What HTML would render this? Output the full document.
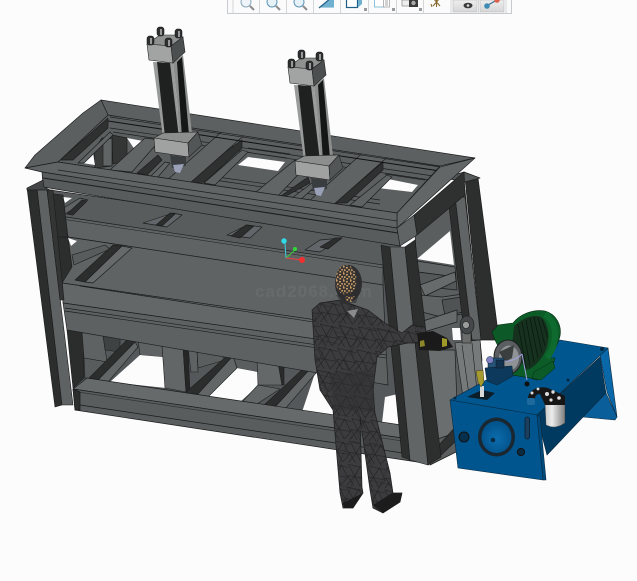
<!DOCTYPE html>
<html><head><meta charset="utf-8"><title>CAD model</title>
<style>
html,body{margin:0;padding:0;background:#fcfcfc;width:637px;height:581px;overflow:hidden}
svg{display:block;position:absolute;left:0;top:0}
</style></head><body>
<svg width="637" height="581" viewBox="0 0 637 581" xmlns="http://www.w3.org/2000/svg">
<defs>
<pattern id="mesh" width="19" height="23" patternUnits="userSpaceOnUse" patternTransform="rotate(4)">
<rect width="19" height="23" fill="#3c3c3e"/>
<path d="M0 2L19 5M0 13L19 15M0 2L7 13L0 23M7 13L12 3M7 13L13 23M12 3L19 15L13 23M0 13L7 23" stroke="#1d1d1e" stroke-width=".55" fill="none"/>
</pattern>
<pattern id="mesh2" width="31" height="37" patternUnits="userSpaceOnUse" patternTransform="rotate(-9)">
<path d="M0 10L31 22M5 0L15 37M31 4L10 37" stroke="#222223" stroke-width=".45" fill="none"/>
</pattern>
<pattern id="sp" width="7" height="7" patternUnits="userSpaceOnUse">
<rect width="7" height="7" fill="#3a3532"/>
<g fill="#cfa268"><rect x="0" y="0" width="1.6" height="1.6"/><rect x="3" y="1" width="1.8" height="1.5"/><rect x="5.3" y="3" width="1.6" height="1.6"/><rect x="1" y="3.3" width="1.6" height="1.6"/><rect x="3.4" y="5" width="1.7" height="1.5"/><rect x="0" y="5.6" width="1.2" height="1.2"/></g>
</pattern>
<linearGradient id="gr" x1="0" x2="0" y1="0" y2="1"><stop offset="0" stop-color="#eee"/><stop offset="1" stop-color="#d6d6d6"/></linearGradient>
<linearGradient id="fl" x1="0" x2="1" y1="0" y2="0"><stop offset="0" stop-color="#c8c8c8"/><stop offset=".35" stop-color="#ececec"/><stop offset="1" stop-color="#7d7d7d"/></linearGradient>
<radialGradient id="gauge" cx=".5" cy=".55" r=".6"><stop offset="0" stop-color="#0d6cad"/><stop offset="1" stop-color="#004f86"/></radialGradient>

<g id="cyl">
<polygon points="153,62 173,63 181,140 163,138" fill="#999b9b"/>
<polygon points="157,62 170,63 179,138 165,137" fill="#1f2020"/>
<polygon points="173,63 183,55 192,133 181,140" fill="#8c8e8e"/>
<polygon points="177,62 182,57 189,135 182,138" fill="#151616"/>
<polygon points="170,155 186,157 186,166 172,168" fill="#3a3d40"/>
<polygon points="173,165 184,164 180,173 175,172" fill="#9aa0b8"/>
<polygon points="154,138 163,133 198,132 188,143" fill="#8c8e8e" stroke="#222" stroke-width=".6"/>
<polygon points="154,138 188,143 189,157 155,152" fill="#a0a1a1" stroke="#222" stroke-width=".6"/>
<polygon points="188,143 198,132 202,145 189,157" fill="#535656" stroke="#222" stroke-width=".6"/>
<polygon points="147,44 160,35 177,35 183,37 171,46" fill="#8f9191" stroke="#222" stroke-width=".6"/>
<polygon points="147,44 171,46 173,63 149,60" fill="#a2a3a3" stroke="#222" stroke-width=".6"/>
<polygon points="171,46 183,37 185,52 173,63" fill="#4c4f4f" stroke="#222" stroke-width=".6"/>
<g fill="#2e2f30" stroke="#111" stroke-width=".5">
<rect x="157" y="27" width="7" height="9" rx="2.5"/><rect x="175" y="29" width="7" height="9" rx="2.5"/><rect x="147" y="36" width="7" height="9" rx="2.5"/><rect x="165" y="38" width="7" height="9" rx="2.5"/>
</g>
<g fill="#999"><rect x="160" y="29" width="2" height="6"/><rect x="178" y="31" width="2" height="6"/><rect x="150" y="38" width="2" height="6"/><rect x="168" y="40" width="2" height="6"/></g>
</g>
</defs>

<rect width="637" height="581" fill="#fcfcfc"/>

<!-- right side section -->
<g stroke="#1d1e1e" stroke-width=".7" stroke-linejoin="round">
<polygon points="415,235 465,190 482,360 460,450 430,465" fill="#5a5e5f"/>
<polygon points="417,259 450,231 454,265" fill="#fcfcfc" stroke="none"/>
<polygon points="417,261 455,267 456,277 418,272" fill="#606465"/>
<polygon points="418,272 456,277 457,290 419,286" fill="#545859"/>
<polygon points="420,285 455,272 456,281 425,296" fill="#676b6c"/>
<polygon points="420,295 442,297 470,293 470,312 445,318 422,312" fill="#5f6364"/>
<polygon points="442,300 468,296 468,311 445,316" fill="#505354"/>
<polygon points="420,322 457,310 457,322 424,332" fill="#676b6c"/>
<polygon points="418,350 455,350 458,432 423,444" fill="#6a6e6f"/>
<polygon points="430,455 458,424 459,438 438,458" fill="#2f3130"/>
<polygon points="465,178 478,178 499,340 481,340" fill="#2d2f2e"/>
<polygon points="455,197 465,197 481,340 472,340" fill="#606465"/>
<polygon points="449,207 455,197 472,340 465,340" fill="#2d2f2e"/>
<polygon points="452,328 460,328 461,340 453,340" fill="#fcfcfc" stroke="none"/>
<polygon points="445,178 464,172 480,178 465,182" fill="#55595a"/>
</g>

<!-- base -->
<polygon points="55,195 400,240 422,462 75,405" fill="#54585a"/>

<!-- under band -->
<g stroke="#1d1e1e" stroke-width=".6" stroke-linejoin="round">
<polygon points="67,330 83,332 84,378 73,388" fill="#2b2d2c"/>
<polygon points="82,332 103,335 107,362 84,358" fill="#5e6263"/>
<polygon points="84,358 107,362 109,381 85,378" fill="#585c5d"/>
<polygon points="103,335 120,338 120,352 105,350" fill="#3f4242"/>
<polygon points="138,340 162,345 163,357 140,355" fill="#5f6364"/>
<polygon points="140,355 163,357 166,388 110,382" fill="#fcfcfc" stroke="none"/>
<polygon points="162,345 183,347 186,392 165,388" fill="#626667"/>
<polygon points="183,347 188,348 190,392 186,392" fill="#252726"/>
<polygon points="188,348 197,350 198,372 191,372" fill="#5e6263"/>
<polygon points="197,350 220,353 225,360 198,368" fill="#5a5e5f"/>
<polygon points="233,356 257,360 258,372 237,368" fill="#5a5e5f"/>
<polygon points="237,368 258,372 259,385 240,402 208,397" fill="#fcfcfc" stroke="none"/>
<polygon points="257,360 278,362 282,385 258,385" fill="#646869"/>
<polygon points="258,385 280,389 257,404 242,402" fill="#626667"/>
<polygon points="278,362 284,364 284,385 282,385" fill="#2a2c2b"/>
<polygon points="315,373 340,376 340,425 300,418" fill="#fcfcfc" stroke="none"/>
<polygon points="385,397 402,393 404,437 381,432" fill="#fcfcfc" stroke="none"/>
<polygon points="87,380 127,340 135,342 97,381" fill="#2c2e2d"/>
<polygon points="97,381 135,342 138,347 108,382" fill="#626667"/>
<polygon points="185,393 228,355 233,356 197,395" fill="#2c2e2d"/>
<polygon points="197,395 233,356 237,368 208,397" fill="#626667"/>
<polygon points="263,406 305,367 311,368 275,407" fill="#2c2e2d"/>
<polygon points="275,407 311,368 316,373 285,409" fill="#626667"/>
</g>

<!-- bottom rail -->
<g stroke="#1a1b1b" stroke-width=".7" stroke-linejoin="round">
<polygon points="87,378 415,427 422,441 73,389" fill="#666a6b"/>
<polygon points="73,389 422,441 424,463 75,410" fill="#595d5e"/>
<line x1="80" y1="405" x2="423" y2="456"/>
<line x1="78" y1="392" x2="422" y2="444" stroke="#333"/>
<polygon points="73,389 80,392 80,410 75,410" fill="#2c2e2d"/>
</g>

<!-- upper area -->
<g stroke="#1c1d1d" stroke-width=".65" stroke-linejoin="round">
<polygon points="50,190 400,240 402,270 53,216" fill="#585c5d"/>
<polygon points="63,197 72,198 65,203" fill="#fcfcfc" stroke="none"/>
<polygon points="55,213 80,198 88,200 65,214" fill="#5f6364"/>
<polygon points="67,214 82,200 87,201 73,215" fill="#2c2e2d"/>
<polygon points="143,223 173,213 182,215 167,227" fill="#62666a"/>
<polygon points="156,225 170,213 175,214 162,226" fill="#2c2e2d"/>
<polygon points="227,235 247,225 262,227 250,238" fill="#62666a"/>
<polygon points="231,236 246,225 254,226 240,238" fill="#2c2e2d"/>
<polygon points="305,250 320,240 342,238 320,252" fill="#62666a"/>
<polygon points="320,247 335,238 342,238 328,249" fill="#2c2e2d"/>
<polygon points="53,215 383,265 383,285 55,235" fill="#5f6364"/>
<polygon points="55,235 383,285 385,330 62,283" fill="#5f6364"/>
<polygon points="55,237 68,237 72,267 62,283" fill="#2c2e2d"/>
<polygon points="68,238 77,241 71,246" fill="#fcfcfc" stroke="none"/>
<polygon points="72,255 105,245 110,249 74,265" fill="#585c5d"/>
<polygon points="75,280 113,245 122,246 85,282" fill="#2c2e2d"/>
<polygon points="85,282 122,246 132,248 93,283" fill="#666a6b"/>
<polygon points="62,283 385,330 386,349 63,303" fill="#636768"/>
<line x1="80" y1="286" x2="385" y2="333" />
<polygon points="63,303 386,349 388,385 67,330" fill="#5d6162"/>
<line x1="65" y1="308" x2="386" y2="355"/>
<line x1="65" y1="311" x2="386" y2="358"/>
</g>
<line x1="62" y1="219" x2="384" y2="268" stroke="#1c1d1d" stroke-width=".5"/>

<text x="255" y="297" font-family="'Liberation Sans',sans-serif" font-weight="bold" font-size="17" fill="#676b6c" letter-spacing="1">cad2068.com</text>

<!-- left column -->
<g stroke="#1a1b1b" stroke-width=".6" stroke-linejoin="round">
<polygon points="48,193 63,195 68,237 55,237" fill="#2d2f2e"/>
<polygon points="27,188 37,188 62,405 55,407" fill="#2c2e2d"/>
<polygon points="37,188 47,190 73,405 62,405" fill="#5e6263"/>
<polygon points="47,190 53,190 64,300 60,300" fill="#333534"/>
</g>

<!-- top frame interior -->
<g stroke="#1c1d1d" stroke-width=".65" stroke-linejoin="round">
<polygon points="108,115 440,166 397,213 58,162" fill="#5b5f60"/>
<polygon points="94,150 102,138 112,138 112,166 95,168" fill="#3a3c3c"/>
<polygon points="103,140 112,138 112,166 103,166" fill="#606465"/>
<polygon points="112,135 127,138 127,160 113,164" fill="#343636"/>
<polygon points="127,138 143,141 135,150" fill="#fcfcfc" stroke="none"/>
<polygon points="82,163 93,153 95,165" fill="#fcfcfc" stroke="none"/>
<polygon points="238,165 248,157 285,162 278,171" fill="#fcfcfc" stroke="none"/>
<polygon points="378,188 388,179 418,185 412,192" fill="#fcfcfc" stroke="none"/>
<polygon points="60,160 108,118 108,128 73,160" fill="#2e3130"/>
<polygon points="78,163 110,132 113,135 84,163" fill="#606465"/>
<line x1="110" y1="128" x2="440" y2="177"/>
<line x1="113" y1="132" x2="437" y2="181"/>
<line x1="210" y1="176" x2="380" y2="200"/>
<line x1="214" y1="180" x2="380" y2="204"/>
<line x1="248" y1="148" x2="290" y2="154"/>
<line x1="245" y1="152" x2="287" y2="158"/>
<line x1="385" y1="174" x2="425" y2="180"/>
<!-- cross bars -->
<polygon points="110,170 145,138 160,140 132,172" fill="#616566"/>
<polygon points="137,173 158,155 162,160 147,175" fill="#2e3130"/>
<polygon points="150,177 165,162 170,163 157,178" fill="#616566"/>
<polygon points="200,170 242,140 242,148 205,182 192,183" fill="#2e3130"/>
<polygon points="204,183 242,150 248,152 215,185" fill="#5e6263"/>
<polygon points="165,182 227,127 250,130 190,183" fill="#5f6364"/>
<polygon points="278,198 308,177 310,183 288,195" fill="#2e3130"/>
<polygon points="250,197 295,160 312,160 275,199" fill="#616566"/>
<polygon points="292,198 312,183 317,185 300,200" fill="#5e6263"/>
<polygon points="350,205 387,175 392,177 362,207" fill="#5e6263"/>
<polygon points="335,203 383,162 383,170 347,203" fill="#2e3130"/>
<polygon points="307,203 368,148 392,153 332,206" fill="#5f6364"/>
<!-- rails -->
<polygon points="101,100 475,158 440,166 108,115" fill="#5c6061"/>
<line x1="110" y1="117" x2="440" y2="167"/>
<line x1="108" y1="121" x2="440" y2="171" stroke="#111" stroke-width="1"/>
<polygon points="475,158 440,167 397,213 397,228" fill="#626667"/>
<polygon points="25,168 35,155 83,113 101,100 108,115 58,162" fill="#5b5f60"/>
<polygon points="25,168 58,162 397,213 397,228 42,172" fill="#606465"/>
<line x1="58" y1="170" x2="397" y2="221"/>
<polygon points="42,172 397,228 400,246 43,187" fill="#585c5d"/>
<line x1="43" y1="178" x2="398" y2="233" stroke-width="1"/>
<polygon points="27,188 43,180 44,187 50,190 27,190" fill="#434646"/>
<polygon points="414,215 464,172 465,195 417,235" fill="#2e3130"/>
<polygon points="397,228 414,215 417,235 400,246" fill="#606465"/>
</g>

<use href="#cyl"/>
<use href="#cyl" transform="translate(141,23)"/>

<!-- front column -->
<g stroke="#1a1b1b" stroke-width=".6" stroke-linejoin="round">
<polygon points="381,245 390,247 410,460 402,457" fill="#2d2f2e"/>
<polygon points="390,247 405,247 428,465 410,460" fill="#616566"/>
<polygon points="405,247 415,240 441,457 428,465" fill="#2d2f2e"/>
</g>

<!-- hydraulic cylinder -->
<g stroke="#1c1d1d" stroke-width=".6">
<polygon points="455,343 480,340 484,387 463,397" fill="#767a7a"/>
<line x1="462" y1="345" x2="469" y2="395"/><line x1="472" y1="343" x2="477" y2="391"/>
<rect x="462" y="332" width="9" height="11" fill="#6a6c6c"/>
<ellipse cx="467" cy="325" rx="7" ry="9" fill="#45484a"/><circle cx="466" cy="325" r="3.5" fill="#9a9c9c"/>
</g>

<!-- tank -->
<g stroke="#0b2a40" stroke-width=".6" stroke-linejoin="round">
<polygon points="537,415 600,357 606,393 583,417 547,455 538,420" fill="#003a60"/>
<polygon points="600,355 608,348 617,417 607,392" fill="#0b68a8"/>
<polygon points="583,417 606,393 617,417 615,420" fill="#0a5f9a"/>
<polygon points="450,400 490,378 560,340 608,348 537,415" fill="#00568f"/>
<polygon points="450,400 537,415 543,480 458,468" fill="#00558e"/>
<polygon points="537,415 540,417 546,480 543,480" fill="#004a7c"/>
</g>
<ellipse cx="496.5" cy="437" rx="18.5" ry="19.5" fill="#1a2731"/>
<ellipse cx="496.5" cy="437" rx="15" ry="16" fill="url(#gauge)"/>
<circle cx="493" cy="440" r="2.3" fill="#0a2b44"/>
<circle cx="464" cy="437" r="5" fill="#06304d" stroke="#111"/>
<circle cx="521" cy="452" r="3.6" fill="#0a2a42" stroke="#111"/>
<rect x="525" y="417" width="4.5" height="22" rx="2.2" fill="#1d3f5e" stroke="#0a2030" stroke-width=".8"/>
<circle cx="602" cy="349" r="2" fill="#062a44"/><circle cx="568" cy="380" r="1.5" fill="#062a44"/><circle cx="455" cy="398" r="1.5" fill="#062a44"/>

<!-- breather -->
<polygon points="467,397 482,390 495,393 487,400" fill="#0c1d28"/>
<rect x="480" y="386" width="4" height="11" fill="#d8d8d8"/>
<polygon points="476,371 483,370 484,382 481,387 478,382" fill="#a59a30" stroke="#3a3510" stroke-width=".5"/>

<!-- motor -->
<path d="M492 332L498 325L513 323C520 314 533 309 545 311C556 314 562 325 560 336C558 345 554 350 550 358L555 358L553 365L537 380L530 378L512 375L495 340Z" fill="#0c5c28" stroke="#052a12" stroke-width=".6"/>
<path d="M514 326C522 318 534 314 541 317C549 323 551 340 545 352C540 362 532 369 526 370L512 345Z" fill="#16321f"/>
<path d="M518 324L526 368M522 322L530 366M526 320L534 362M530 318L538 358M534 317L542 353M538 317L545 346M542 319L548 338" stroke="#0b1a10" stroke-width=".9"/>
<path d="M545 314C560 326 556 346 547 358" stroke="#0e6a2e" stroke-width="6" fill="none"/>
<polygon points="494,332 502,326 513,325 510,340 498,340" fill="#0d5a28"/>
<ellipse cx="508" cy="357" rx="14" ry="17" fill="#5b5e60" stroke="#1c1f20"/>
<ellipse cx="509" cy="358" rx="10" ry="12.5" fill="#8f9395"/>
<polygon points="499,352 514,345 512,358 505,362" fill="#3c3f40"/>
<path d="M504 361Q514 362 522 354M522 354L527 380" stroke="#a0a2e0" stroke-width="1" fill="none"/>
<circle cx="527" cy="384" r="2.5" fill="#111"/>
<polygon points="534,372 553,361 555,368 541,380 532,378" fill="#0b5a27" stroke="#052a12" stroke-width=".5"/>

<!-- pump -->
<g stroke="#0c1d2b" stroke-width=".5">
<rect x="488" y="358" width="16" height="13" fill="#255478"/>
<polygon points="485,368 512,366 513,376 497,385 487,381" fill="#0d3a5c"/>
<circle cx="490" cy="360" r="3.5" fill="#7f80c2"/>
<rect x="496" y="360" width="8" height="8" fill="#12324e"/>
</g>

<!-- filter -->
<path d="M545 403L565 403L565 423 Q555 430 546 425Z" fill="url(#fl)" stroke="#333" stroke-width=".4"/>
<path d="M528 399 C528 389 540 386 548 388 L565 396 L565 405 L545 405 L540 394 C536 394 535 396 535 399Z" fill="#161616"/>
<g fill="#dcdcdc"><circle cx="532" cy="393" r="1.5"/><circle cx="538" cy="389" r="1.4"/><circle cx="547" cy="394" r="2"/><circle cx="553" cy="392" r="1.7"/><circle cx="559" cy="398" r="1.8"/><circle cx="551" cy="400" r="1.6"/></g>
<rect x="527" y="398" width="8" height="7" rx="2" fill="#1f6a9c"/>

<!-- man -->
<polygon points="312,310 320,303 340,300 368,310 385,323 402,333 412,325 425,327 427,338 418,343 408,343 388,347 377,357 373,390 375,413 390,473 393,493 402,493 400,502 383,513 373,508 370,490 360,417 362,487 363,493 353,508 343,508 340,493 333,410 320,390 315,360" fill="url(#mesh)" stroke="#1e1e1e" stroke-width=".7"/>
<polygon points="312,310 320,303 340,300 368,310 385,323 402,333 412,325 425,327 427,338 418,343 408,343 388,347 377,357 373,390 375,413 390,473 393,493 402,493 400,502 383,513 373,508 370,490 360,417 362,487 363,493 353,508 343,508 340,493 333,410 320,390 315,360" fill="url(#mesh2)"/>
<polygon points="347,311 358,309 354,318" fill="#8a8c8c"/>
<polygon points="330,375 373,370 375,412 334,410" fill="#303032" opacity=".5"/>
<polygon points="343,503 353,498 363,493 353,508 344,508" fill="#1c1c1c"/>
<polygon points="373,505 392,493 402,494 400,502 383,513" fill="#1c1c1c"/>
<ellipse cx="348.5" cy="283.5" rx="13.5" ry="18.5" fill="#2e2d30"/>
<ellipse cx="346" cy="280" rx="10.5" ry="15" fill="url(#sp)"/>
<polygon points="336,295 360,290 356,303 342,303" fill="#2e2d30" opacity=".55"/>
<polygon points="345,296 355,296 352,302 346,301" fill="url(#sp)"/>

<!-- handheld -->
<polygon points="417,333 433,331 447,338 453,347 440,351 419,350" fill="#1a1a1a"/>
<polygon points="442,338 447,339 447,346 442,347" fill="#a09a2a"/>
<polygon points="420,341 424,340 425,346 420,347" fill="#8c8628"/>

<!-- triad -->
<g fill="none" stroke-width="1">
<line x1="285" y1="243" x2="286" y2="258" stroke="#38cfdf"/>
<line x1="286" y1="258" x2="295" y2="250" stroke="#34d13a"/>
<line x1="286" y1="258" x2="302" y2="260" stroke="#ee4040"/>
</g>
<circle cx="284" cy="241" r="2.7" fill="#30dbe8"/>
<circle cx="295" cy="249" r="2" fill="#30d838"/>
<circle cx="302" cy="260" r="3" fill="#f23030"/>

<!-- toolbar -->
<rect x="227.5" y="-2" width="284" height="15.5" fill="#fafafa" stroke="#c7cbd0"/>
<rect x="233" y="-1" width="273" height="14" fill="#fbfbfb"/>
<g stroke="#d4d7da" stroke-width="1">
<line x1="233" y1="0" x2="233" y2="13"/><line x1="259.5" y1="0" x2="259.5" y2="13"/><line x1="286.5" y1="0" x2="286.5" y2="13"/><line x1="313.5" y1="0" x2="313.5" y2="13"/><line x1="340.5" y1="0" x2="340.5" y2="13"/><line x1="368.5" y1="0" x2="368.5" y2="13"/><line x1="396.5" y1="0" x2="396.5" y2="13"/><line x1="423.5" y1="0" x2="423.5" y2="13"/><line x1="451" y1="0" x2="451" y2="13"/><line x1="478.5" y1="0" x2="478.5" y2="13"/><line x1="506" y1="0" x2="506" y2="13"/>
</g>
<rect x="453" y="0" width="24" height="12" fill="url(#gr)" stroke="#bbb" stroke-width=".6"/>
<rect x="480" y="0" width="24" height="12" fill="url(#gr)" stroke="#bbb" stroke-width=".6"/>
<g fill="none">
<circle cx="246" cy="2" r="5" stroke="#8aa9bd" fill="#eef4f8"/><line x1="250" y1="6" x2="254" y2="10" stroke="#8d8d8d" stroke-width="2"/>
<circle cx="272" cy="2" r="5" stroke="#5f97bb" fill="#e6f1f8"/><line x1="276" y1="6" x2="280" y2="10" stroke="#8d8d8d" stroke-width="2"/>
<circle cx="299" cy="2" r="5" stroke="#5f97bb" fill="#e6f1f8"/><line x1="303" y1="6" x2="307" y2="10" stroke="#8d8d8d" stroke-width="2"/>
</g>
<polygon points="319,7 331,-1 334,-1 334,7" fill="#6fb1cf"/><line x1="319" y1="8" x2="331" y2="-2" stroke="#1f5f85" stroke-width="1.2"/>
<rect x="321" y="7" width="13" height="1" fill="#a6cfe0"/>
<rect x="346.5" y="-3" width="11" height="10.5" fill="#fff" stroke="#1f5f85" stroke-width="1.2"/><polygon points="358,-2 362,-3 362,4 358,7.5" fill="#6fb1cf"/>
<rect x="364" y="8" width="3" height="3" fill="#9a9a9a"/><rect x="392" y="8" width="3" height="3" fill="#9a9a9a"/><rect x="419" y="8" width="3" height="3" fill="#9a9a9a"/>
<rect x="374.5" y="-2" width="10" height="9" fill="#fff" stroke="#8cc3de"/><rect x="383.5" y="-1" width="6" height="8" fill="#fff" stroke="#999" stroke-width=".7"/>
<path d="M385 1h3M385 3h3M385 5h3" stroke="#888" stroke-width=".7"/>
<rect x="402" y="0" width="8" height="6" fill="#eee" stroke="#888" stroke-width=".7"/><rect x="409" y="-1" width="9" height="8" fill="#3a3a3a"/><circle cx="413.5" cy="3" r="2.2" fill="#aaa"/>
<path d="M433 -2L440 6M440 -2L433 6M436.5 -2V7M431 4L432 7" stroke="#8a6a2e" stroke-width="1.1"/>
<ellipse cx="468" cy="5.5" rx="4.5" ry="2.8" fill="#3a3a3a"/><circle cx="468" cy="5.5" r="1.3" fill="#ddd"/>
<line x1="488" y1="5" x2="497" y2="0" stroke="#3f6f93" stroke-width="1.2"/>
<circle cx="487" cy="6" r="2.8" fill="#3e8bb5"/><circle cx="497" cy="0" r="2.8" fill="#e0604e"/>
</svg>
</body></html>
